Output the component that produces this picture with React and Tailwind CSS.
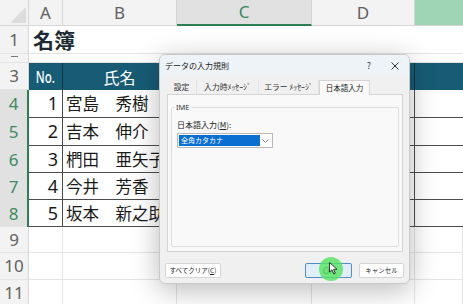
import React from 'react';

const FONT = { fontFamily: '"Noto Sans", "Noto Sans CJK JP", sans-serif' };
const JP = { fontFamily: '"Noto Sans CJK JP", sans-serif' };

const colWidths = ['w-[34px]', 'w-[114px]', 'w-[135px]', 'w-[103px]', 'w-[48px]'];

const people = [
  { no: 1, name: '宮島　秀樹', h: 'h-[28px]' },
  { no: 2, name: '吉本　伸介', h: 'h-[28px]' },
  { no: 3, name: '椚田　亜矢子', h: 'h-[27px]' },
  { no: 4, name: '今井　芳香', h: 'h-[27px]' },
  { no: 5, name: '坂本　新之助', h: 'h-[27px]' },
];

const RowHead = ({ children, selected, className = '' }) => (
  <div
    className={
      'w-[29px] shrink-0 flex items-center justify-center text-[17px] ' +
      (selected
        ? 'bg-[#e1e1e1] text-[#3c8a5e] border-r-2 border-[#2f7d52] '
        : 'bg-[#f3f3f3] text-[#606060] border-r border-[#d6d6d6] ') +
      className
    }
  >
    {children}
  </div>
);

const EmptyRow = ({ label, h }) => (
  <div className={'flex ' + h}>
    <RowHead className="border-b border-b-[#e4e4e4]">{label}</RowHead>
    {colWidths.map((w, i) => (
      <div key={i} className={w + ' shrink-0 bg-white border-r border-b border-[#e4e4e4]'} />
    ))}
  </div>
);

const Sheet = () => (
  <div className="flex flex-col" style={FONT}>
    {/* column headers */}
    <div className="flex h-[26px]">
      <div className="w-[29px] shrink-0 bg-[#f3f3f3] border-r border-b border-[#d6d6d6] relative">
        <div className="absolute right-[2px] bottom-[2px] w-0 h-0 border-l-[16px] border-l-transparent border-b-[16px] border-b-[#dcdcdc]" />
      </div>
      <div className="w-[34px] shrink-0 bg-[#f3f3f3] border-r border-b border-[#d6d6d6] flex items-center justify-center text-[17px] text-[#606060]">A</div>
      <div className="w-[114px] shrink-0 bg-[#f3f3f3] border-r border-b border-[#d6d6d6] flex items-center justify-center text-[17px] text-[#606060]">B</div>
      <div className="w-[135px] shrink-0 bg-[#e1e1e1] border-r border-[#d6d6d6] border-b-2 border-b-[#2f7d52] flex items-center justify-center text-[17px] text-[#3c8a5e]">C</div>
      <div className="w-[103px] shrink-0 bg-[#f3f3f3] border-r border-b border-[#d6d6d6] flex items-center justify-center text-[17px] text-[#606060]">D</div>
      <div className="w-[48px] shrink-0 bg-[#9fd5b4] border-b border-[#d6d6d6]" />
    </div>

    {/* row 1 */}
    <div className="flex h-[28px]">
      <RowHead className="border-b border-b-[#e4e4e4]">1</RowHead>
      <div className="w-[434px] bg-white border-b border-[#e4e4e4] flex items-center pl-[4px]">
        <span className="text-[21px] font-bold text-[#1c2b33]" style={JP}>名簿</span>
      </div>
    </div>

    {/* row 2 (tiny) */}
    <div className="flex h-[9px]">
      <RowHead className="border-b border-b-[#e4e4e4] items-start">
        <div className="w-[7px] h-px bg-[#777] mt-[2px]" />
      </RowHead>
      <div className="w-[434px] bg-white border-b border-[#e4e4e4]" />
    </div>

    {/* row 3: table header */}
    <div className="flex h-[27px]">
      <RowHead className="border-b border-b-[#e4e4e4]">3</RowHead>
      <div className="w-[34px] shrink-0 bg-[#175c74] border-r border-[#0e3442] flex items-center justify-center text-white text-[16px]">
        <span className="inline-block scale-x-[0.72] font-medium">No.</span>
      </div>
      <div className="w-[114px] shrink-0 bg-[#175c74] border-r border-[#0e3442] flex items-center justify-center text-white text-[16px]" style={JP}>氏名</div>
      <div className="w-[135px] shrink-0 bg-[#175c74] border-r border-[#0e3442]" />
      <div className="w-[103px] shrink-0 bg-[#175c74] border-r border-[#0e3442]" />
      <div className="w-[48px] shrink-0 bg-[#175c74]" />
    </div>

    {/* data rows */}
    {people.map((p, idx) => (
      <div key={p.no} className={'flex ' + p.h}>
        <RowHead selected>{idx + 4}</RowHead>
        <div className="w-[34px] shrink-0 bg-white border-r border-b border-[#4c4c4c] flex items-center justify-end pr-[4px] text-[18px] text-[#1a1a1a]">{p.no}</div>
        <div className="w-[114px] shrink-0 bg-white border-r border-b border-[#4c4c4c] flex items-center pl-[3px] text-[16.5px] text-[#1a1a1a] whitespace-nowrap overflow-hidden" style={JP}>{p.name}</div>
        <div className="w-[135px] shrink-0 bg-white border-r border-b border-[#4c4c4c]" />
        <div className="w-[103px] shrink-0 bg-white border-r border-b border-[#4c4c4c]" />
        <div className="w-[48px] shrink-0 bg-white border-b border-[#4c4c4c]" />
      </div>
    ))}

    <EmptyRow label="9" h="h-[26px]" />
    <EmptyRow label="10" h="h-[27px]" />
    <EmptyRow label="11" h="h-[27px]" />
  </div>
);

const Tab = ({ children, active, w }) =>
  active ? (
    <div className={w + ' h-[15px] -mb-px bg-[#f9f9f9] border border-b-0 border-[#d4d4d4] flex items-center justify-center text-[7.5px] text-[#222] whitespace-nowrap z-10'}>
      {children}
    </div>
  ) : (
    <div className={w + ' h-[14px] border-r border-[#e2e2e2] flex items-center justify-center text-[7.8px] text-[#333] whitespace-nowrap'}>{children}</div>
  );

const Dialog = () => (
  <div
    className="absolute left-[159px] top-[54px] w-[251px] h-[230px] rounded-[6px] bg-[#f0f0f0] border border-[#c9c9c9] shadow-[0_6px_28px_rgba(0,0,0,0.28)] flex flex-col overflow-hidden"
    style={JP}
  >
    {/* title bar */}
    <div className="h-[22px] bg-[#eef3f8] flex items-center pl-[5px] pr-[10px] text-[8px] text-[#222] whitespace-nowrap">
      <span>データの入力規則</span>
      <span className="ml-auto text-[9px] text-[#333] mr-[20px]">?</span>
      <svg width="8" height="8" viewBox="0 0 8 8" className="text-[#333]">
        <path d="M0.5 0.5 L7.5 7.5 M7.5 0.5 L0.5 7.5" stroke="currentColor" strokeWidth="1" />
      </svg>
    </div>

    {/* tabs */}
    <div className="flex items-end mt-[3px] ml-[7px]">
      <Tab w="w-[30px]">設定</Tab>
      <Tab w="w-[62px]">入力時ﾒｯｾｰｼﾞ</Tab>
      <Tab w="w-[60px]">エラー ﾒｯｾｰｼﾞ</Tab>
      <Tab w="w-[51px]" active>日本語入力</Tab>
    </div>

    {/* tab panel */}
    <div className="mx-[6px] ml-[7px] h-[158px] bg-[#f9f9f9] border border-[#d4d4d4] relative px-[3px] pt-[12px] pb-[4px]">
      <div className="h-full border border-[#dedede] rounded-[2px] relative pl-[5px] pt-[8px]">
        <span className="absolute -top-[6px] left-[3px] bg-[#f9f9f9] px-px text-[7.5px] text-[#333]" style={FONT}>IME</span>
        <div className="text-[8px] text-[#222] mt-[3px] whitespace-nowrap">
          日本語入力(<span className="underline">M</span>):
        </div>
        <div className="mt-[2px] w-[96px] h-[15px] bg-white border border-[#b9b9b9] flex items-center p-[1px]">
          <div className="flex-1 h-full bg-[#0a6fd1] text-white text-[7px] flex items-center pl-[2px] whitespace-nowrap">全角カタカナ</div>
          <div className="w-[11px] h-full flex items-center justify-center">
            <svg width="7" height="4" viewBox="0 0 7 4">
              <path d="M0.5 0.5 L3.5 3.5 L6.5 0.5" stroke="#666" strokeWidth="0.8" fill="none" />
            </svg>
          </div>
        </div>
      </div>
    </div>

    {/* buttons */}
    <div className="flex items-center mt-[11px] px-[5px] relative">
      <div className="w-[56px] h-[15px] bg-white border border-[#d4d4d4] rounded-[2px] flex items-center justify-center text-[6.5px] text-[#222] whitespace-nowrap">
        すべてクリア(<span className="underline">C</span>)
      </div>
      <div className="ml-auto w-[47px] h-[15px] bg-[#e1eef9] border border-[#4f8fc5] rounded-[2px] flex items-center justify-center text-[8px] text-[#222] relative" style={FONT}>
        OK
      </div>
      <div className="ml-[7px] w-[45px] h-[15px] bg-white border border-[#d4d4d4] rounded-[2px] flex items-center justify-center text-[6.5px] text-[#222] whitespace-nowrap">
        キャンセル
      </div>
    </div>

    {/* click highlight + cursor */}
    <div className="absolute left-[159px] top-[202px] w-[24px] h-[24px] rounded-full bg-[#52e35f] opacity-80" />
    <svg className="absolute left-[169px] top-[207px]" width="9" height="13" viewBox="0 0 9 13">
      <path d="M0.5 0.5 L0.5 10 L3 7.8 L4.8 12 L6.3 11.3 L4.6 7.3 L8 7.3 Z" fill="white" stroke="#222" strokeWidth="0.9" strokeLinejoin="round" />
    </svg>
  </div>
);

export default function App() {
  return (
    <div className="relative w-[463px] h-[304px] overflow-hidden bg-white">
      <Sheet />
      <Dialog />
    </div>
  );
}
